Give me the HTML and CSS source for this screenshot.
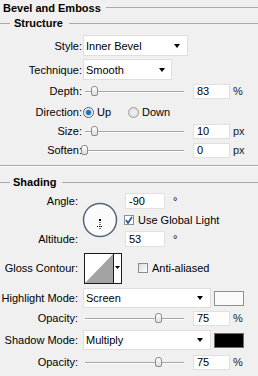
FILE: index.html
```html
<!DOCTYPE html>
<html lang="en">
<head>
    <meta charset="UTF-8">
    <title>Bevel and Emboss</title>
    <link rel="stylesheet" href="styles.css">
</head>
<body>
    <div class="panel">
        <div class="title">Bevel and Emboss</div>

        <section class="group structure">
            <div class="group-head"><span>Structure</span></div>

            <div class="row row-select">
                <span class="lab">Style:</span>
                <div class="select select-style"><span>Inner Bevel</span><i class="arrow"></i></div>
            </div>
            <div class="row row-select row-tech">
                <span class="lab">Technique:</span>
                <div class="select select-tech"><span>Smooth</span><i class="arrow"></i></div>
            </div>
            <div class="row">
                <span class="lab">Depth:</span>
                <div class="slider"><i class="thumb" style="left: 10%"></i></div>
                <input class="num" type="text" value="83" readonly>
                <span class="unit">%</span>
            </div>
            <div class="row row-dir">
                <span class="lab">Direction:</span>
                <span class="radio checked"></span><span class="opt">Up</span>
                <span class="radio radio-down"></span><span class="opt">Down</span>
            </div>
            <div class="row">
                <span class="lab">Size:</span>
                <div class="slider"><i class="thumb" style="left: 10%"></i></div>
                <input class="num" type="text" value="10" readonly>
                <span class="unit">px</span>
            </div>
            <div class="row">
                <span class="lab">Soften:</span>
                <div class="slider"><i class="thumb" style="left: 0%"></i></div>
                <input class="num" type="text" value="0" readonly>
                <span class="unit">px</span>
            </div>
        </section>

        <div class="sep"></div>

        <section class="group shading">
            <div class="group-head"><span>Shading</span></div>

            <div class="angle-block">
                <span class="lab lab-angle">Angle:</span>
                <svg class="dial" width="36" height="36" viewBox="0 0 36 36">
                    <circle cx="18" cy="18" r="16.5" fill="#fbfbfb" stroke="#56667c" stroke-width="1.5"/>
                    <rect x="17" y="17" width="2" height="2" fill="#000"/>
                    <line x1="18" y1="20" x2="18" y2="28" stroke="#000" stroke-width="1" stroke-dasharray="1 1"/>
                    <line x1="15" y1="24.5" x2="21" y2="24.5" stroke="#000" stroke-width="1" stroke-dasharray="1 1"/>
                </svg>
                <div class="cell cell-angle">
                    <input class="num num-deg" type="text" value="-90" readonly>
                    <span class="deg">°</span>
                </div>
                <div class="cell cell-global">
                    <span class="check checked">
                        <svg width="8" height="8" viewBox="0 0 8 8"><polyline points="1,4 3,7 7,1" fill="none" stroke="#2d5b9e" stroke-width="1.8"/></svg>
                    </span>
                    <span class="opt">Use Global Light</span>
                </div>
                <span class="lab lab-alt">Altitude:</span>
                <div class="cell cell-alt">
                    <input class="num num-deg" type="text" value="53" readonly>
                    <span class="deg">°</span>
                </div>
            </div>

            <div class="row row-contour">
                <span class="lab">Gloss Contour:</span>
                <svg class="contour" width="38" height="31" viewBox="0 0 38 31">
                    <rect x="0.5" y="0.5" width="37" height="30" fill="#fff" stroke="#1a1a1a"/>
                    <polygon points="1,30 29,1 29,30" fill="#a3a3a3"/>
                    <line x1="29.5" y1="0" x2="29.5" y2="31" stroke="#1a1a1a"/>
                    <polygon points="31,13 36,13 33.5,16" fill="#000"/>
                </svg>
                <span class="check check-aa"></span>
                <span class="opt">Anti-aliased</span>
            </div>

            <div class="row row-select row-mode">
                <span class="lab">Highlight Mode:</span>
                <div class="select select-mode"><span>Screen</span><i class="arrow"></i></div>
                <span class="swatch swatch-white"></span>
            </div>
            <div class="row row-op">
                <span class="lab">Opacity:</span>
                <div class="slider"><i class="thumb" style="left: 75%"></i></div>
                <input class="num" type="text" value="75" readonly>
                <span class="unit">%</span>
            </div>
            <div class="row row-select row-mode row-shadow">
                <span class="lab">Shadow Mode:</span>
                <div class="select select-mode"><span>Multiply</span><i class="arrow"></i></div>
                <span class="swatch swatch-black"></span>
            </div>
            <div class="row row-op2">
                <span class="lab">Opacity:</span>
                <div class="slider"><i class="thumb" style="left: 75%"></i></div>
                <input class="num" type="text" value="75" readonly>
                <span class="unit">%</span>
            </div>
        </section>
    </div>
</body>
</html>
```

FILE: styles.css
```css
/* Layer style panel */
body {
    margin: 0;
    background: #f0f0f0;
    font-family: 'Liberation Sans', Arial, sans-serif;
    font-size: 11px;
    color: #000;
}

.panel {
    width: 258px;
    height: 376px;
    overflow: hidden;
}

.title {
    height: 15px;
    display: flex;
    align-items: center;
    padding-left: 3px;
    font-weight: bold;
}

.title::after {
    content: "";
    flex: 1;
    border-top: 1px solid #a9a9a9;
    margin-left: 5px;
}

.group-head {
    height: 16px;
    display: flex;
    align-items: center;
    font-weight: bold;
}

.group-head::before {
    content: "";
    width: 10px;
    border-top: 1px solid #a9a9a9;
}

.group-head span {
    padding: 0 6px 0 4px;
}

.group-head::after {
    content: "";
    flex: 1;
    border-top: 1px solid #a9a9a9;
}

.shading .group-head span {
    padding-left: 3px;
}

.row {
    display: flex;
    align-items: center;
    height: 16px;
    margin-top: 3px;
}

.lab {
    width: 83px;
    flex: none;
    box-sizing: border-box;
    text-align: right;
    padding-right: 1px;
}

.shading .lab {
    padding-right: 5px;
}

/* dropdowns */
.row-select {
    height: 21px;
    margin-top: 4px;
}

.row-tech {
    margin-top: 3px;
}

.select {
    position: relative;
    height: 21px;
    box-sizing: border-box;
    background: #fff;
    border: 1px solid #dedede;
    display: flex;
    align-items: center;
    padding-left: 2px;
}

.select-style {
    width: 105px;
}

.select-tech {
    width: 89px;
}

.select-mode {
    width: 128px;
    height: 20px;
}

.arrow {
    position: absolute;
    right: 7px;
    top: 50%;
    margin-top: -2px;
    width: 0;
    height: 0;
    border-top: 4px solid #000;
    border-left: 3px solid transparent;
    border-right: 3px solid transparent;
}

.select-tech .arrow {
    right: 6px;
}

/* sliders */
.slider {
    position: relative;
    width: 99px;
    height: 16px;
    margin-left: 2px;
    flex: none;
}

.slider::before {
    content: "";
    position: absolute;
    left: 0;
    right: 0;
    top: 8px;
    border-top: 1px solid #a6a6a6;
    border-bottom: 1px solid #fff;
}

.thumb {
    position: absolute;
    top: 3px;
    width: 7px;
    height: 10px;
    margin-left: -4px;
    box-sizing: border-box;
    border: 1px solid #8c8c8c;
    border-radius: 3px 3px 2px 2px;
    background: linear-gradient(#fff, #dcdcdc);
}

.num {
    width: 37px;
    height: 15px;
    margin: 0 0 0 9px;
    padding: 0 0 0 3px;
    box-sizing: border-box;
    border: 1px solid #e0e0e0;
    background: #fff;
    font: inherit;
    color: #000;
    outline: none;
}

.unit {
    margin-left: 3px;
    color: #222;
}

/* radios and checkboxes */
.row-dir {
    margin-top: 5px;
}

.radio {
    width: 11px;
    height: 11px;
    box-sizing: border-box;
    border-radius: 50%;
    border: 1px solid #9a9a9a;
    background: radial-gradient(circle, #f2f2f2 0, #dadada 100%);
    margin-left: 0;
    flex: none;
}

.radio.checked {
    border-color: #4d5c70;
    background: radial-gradient(circle, #0b5aa6 0, #3b86cf 2.5px, #fff 3.5px, #e8e8e8 100%);
}

.radio-down {
    margin-left: 17px;
}

.opt {
    margin-left: 3px;
}

.check {
    width: 10px;
    height: 10px;
    box-sizing: border-box;
    border: 1px solid #8e8e8e;
    background: linear-gradient(135deg, #dcdcdc, #fff);
    display: flex;
    align-items: center;
    justify-content: center;
    flex: none;
}

.check.checked {
    background: #fff;
}

.check + .opt {
    margin-left: 4px;
}

/* angle / altitude */
.angle-block {
    display: grid;
    grid-template-columns: 83px 41px 1fr;
    grid-template-rows: 16px 18px 16px;
    row-gap: 2px;
    margin-top: 3px;
    align-items: center;
}

.lab-angle {
    grid-column: 1;
    grid-row: 1;
}

.lab-alt {
    grid-column: 1;
    grid-row: 3;
}

.dial {
    grid-column: 2;
    grid-row: 1 / 4;
    margin-left: -1px;
}

.cell {
    display: flex;
    align-items: center;
    grid-column: 3;
}

.cell-angle {
    grid-row: 1;
}

.cell-global {
    grid-row: 2;
}

.cell-alt {
    grid-row: 3;
}

.num-deg {
    width: 40px;
    height: 16px;
    margin-left: 1px;
}

.deg {
    margin-left: 8px;
}

/* contour */
.row-contour {
    height: 32px;
    margin-top: 5px;
}

.contour {
    margin-left: 1px;
}

.check-aa {
    margin-left: 16px;
}

/* shading modes */
.row-mode {
    height: 20px;
}

.row-shadow {
    margin-top: 4px;
}

.row-op {
    margin-top: 2px;
}

.row-op2 {
    margin-top: 4px;
}

.swatch {
    width: 30px;
    height: 15px;
    margin-left: 3px;
    box-sizing: border-box;
    border: 1px solid #909090;
}

.swatch-white {
    background: #fafafa;
}

.swatch-black {
    background: #000;
    border-color: #6e6e6e;
}

.sep {
    margin-top: 7px;
    border-top: 1px solid #a9a9a9;
    border-bottom: 1px solid #fff;
}

.shading .group-head {
    margin-top: 7px;
}
```
